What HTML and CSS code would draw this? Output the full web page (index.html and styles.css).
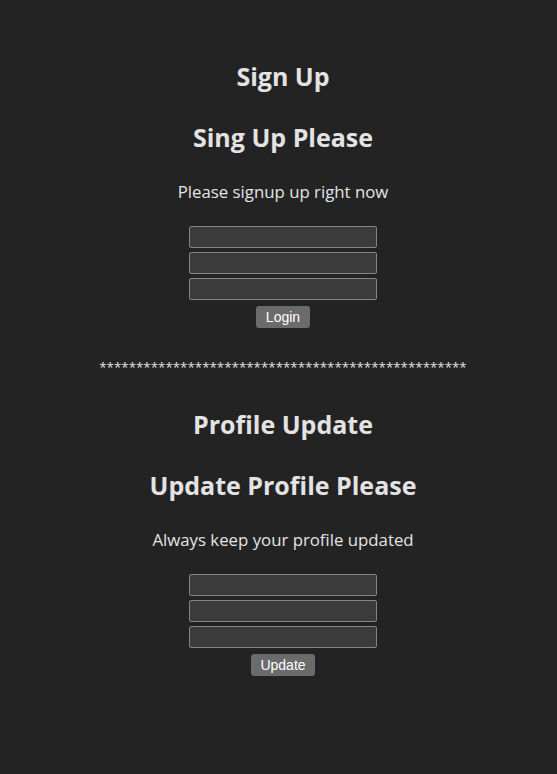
FILE: index.html
```html
<!DOCTYPE html>
<html>
<head>
<meta charset="utf-8">
<link rel="stylesheet" href="styles.css">
</head>
<body>
<main class="page">
  <section class="block">
    <h2 class="title">Sign Up</h2>
    <h2 class="subtitle">Sing Up Please</h2>
    <p class="lead">Please signup up right now</p>
    <form class="form">
      <input class="field" type="text">
      <input class="field" type="text">
      <input class="field" type="text">
      <button class="btn" type="button">Login</button>
    </form>
  </section>
  <div class="divider">**************************************************</div>
  <section class="block">
    <h2 class="title">Profile Update</h2>
    <h2 class="subtitle">Update Profile Please</h2>
    <p class="lead">Always keep your profile updated</p>
    <form class="form">
      <input class="field" type="text">
      <input class="field" type="text">
      <input class="field" type="text">
      <button class="btn" type="button">Update</button>
    </form>
  </section>
</main>
</body>
</html>
```
FILE: styles.css
```css
html, body {
  margin: 0;
  padding: 0;
  background: #232323;
}
body {
  color: #e3e3e3;
  font-family: "Open Sans", "Noto Sans", sans-serif;
  text-align: center;
}
.page {
  display: flex;
  flex-direction: column;
  align-items: center;
  padding-top: 60px;
  padding-left: 9px;
}
.block {
  display: flex;
  flex-direction: column;
  align-items: center;
}
.title, .subtitle {
  margin: 0;
  font-size: 25px;
  line-height: 32px;
  font-weight: 700;
}
.subtitle {
  margin-top: 29px;
}
.lead {
  margin: 28px 0 0;
  font-size: 16.8px;
  line-height: 22px;
}
.form {
  display: flex;
  flex-direction: column;
  align-items: center;
  gap: 4px;
  margin-top: 23px;
}
.field {
  box-sizing: border-box;
  width: 188px;
  height: 22px;
  margin: 0;
  background: #3b3b3b;
  border: 1px solid #858585;
  border-radius: 2px;
  color: #e3e3e3;
}
.btn {
  margin-top: 2px;
  height: 22px;
  padding: 0 9.5px;
  background: #6b6b6b;
  color: #fff;
  border: none;
  border-radius: 3px;
  font-family: "Liberation Sans", Arial, sans-serif;
  font-size: 14px;
}
.divider {
  margin: 28px 0 30px;
  font-size: 13.35px;
  line-height: 22px;
}
```
